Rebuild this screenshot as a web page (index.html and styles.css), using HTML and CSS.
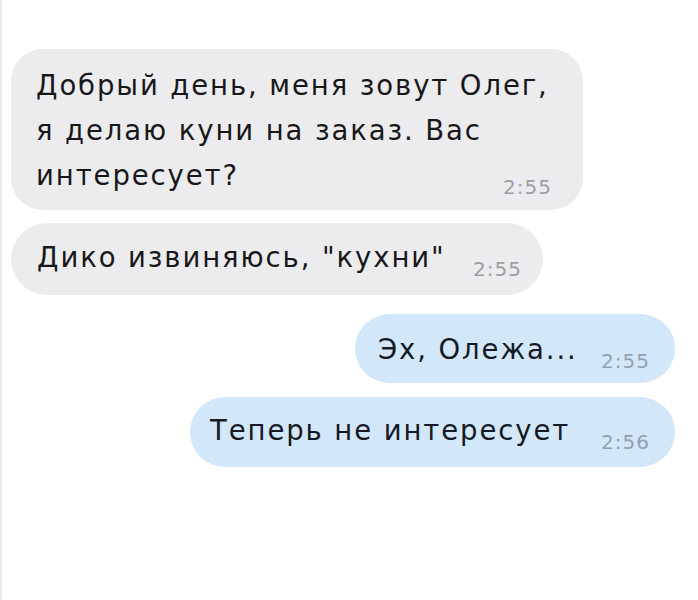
FILE: index.html
```html
<!DOCTYPE html>
<html lang="ru">
<head>
<meta charset="utf-8">
<title>Чат</title>
<link rel="stylesheet" href="styles.css">
</head>
<body>
<div class="chat">
  <div class="bubble in b1">
    <div class="line">Добрый день, меня зовут Олег,</div>
    <div class="line">я делаю куни на заказ. Вас</div>
    <div class="row"><span class="text">интересует?</span><span class="time">2:55</span></div>
  </div>
  <div class="bubble in b2">
    <div class="row"><span class="text">Дико извиняюсь, "кухни"</span><span class="time">2:55</span></div>
  </div>
  <div class="bubble out b3">
    <div class="row"><span class="text">Эх, Олежа...</span><span class="time">2:55</span></div>
  </div>
  <div class="bubble out b4">
    <div class="row"><span class="text">Теперь не интересует</span><span class="time">2:56</span></div>
  </div>
</div>
</body>
</html>
```

FILE: styles.css
```css
html, body {
  margin: 0;
  padding: 0;
  background: #ffffff;
}
body {
  width: 698px;
  height: 600px;
  box-sizing: border-box;
  border-left: 2px solid #ececec;
  font-family: "DejaVu Sans", "Liberation Sans", sans-serif;
}
.chat {
  display: flex;
  flex-direction: column;
  padding-top: 49px;
}
.bubble {
  box-sizing: border-box;
  font-size: 27.5px;
  line-height: 45px;
  letter-spacing: 1.9px;
  white-space: nowrap;
}
.in {
  background: #ececef;
  color: #18181a;
  margin-left: 9px;
}
.out {
  background: #d3e7fa;
  color: #151a24;
  align-self: flex-end;
  margin-right: 23px;
}
.row {
  display: flex;
  justify-content: space-between;
  align-items: flex-end;
}
.time {
  font-size: 20px;
  line-height: 21px;
  letter-spacing: 1px;
  margin-bottom: 0;
  margin-left: 16px;
}
.in .time { color: #9c9ea6; }
.out .time { color: #93a0b0; }
.b1 {
  width: 572px;
  height: 161px;
  padding: 14px 31px 0 25px;
  border-radius: 32px;
}
.b2 {
  width: 532px;
  height: 72px;
  margin-top: 13px;
  padding: 12px 21px 0 26px;
  border-radius: 36px;
}
.b3 {
  width: 320px;
  height: 69px;
  margin-top: 19px;
  padding: 13px 25px 0 23px;
  border-radius: 35px;
}
.b4 {
  width: 485px;
  height: 70px;
  margin-top: 14px;
  padding: 11px 25px 0 20px;
  border-radius: 35px;
}
```
